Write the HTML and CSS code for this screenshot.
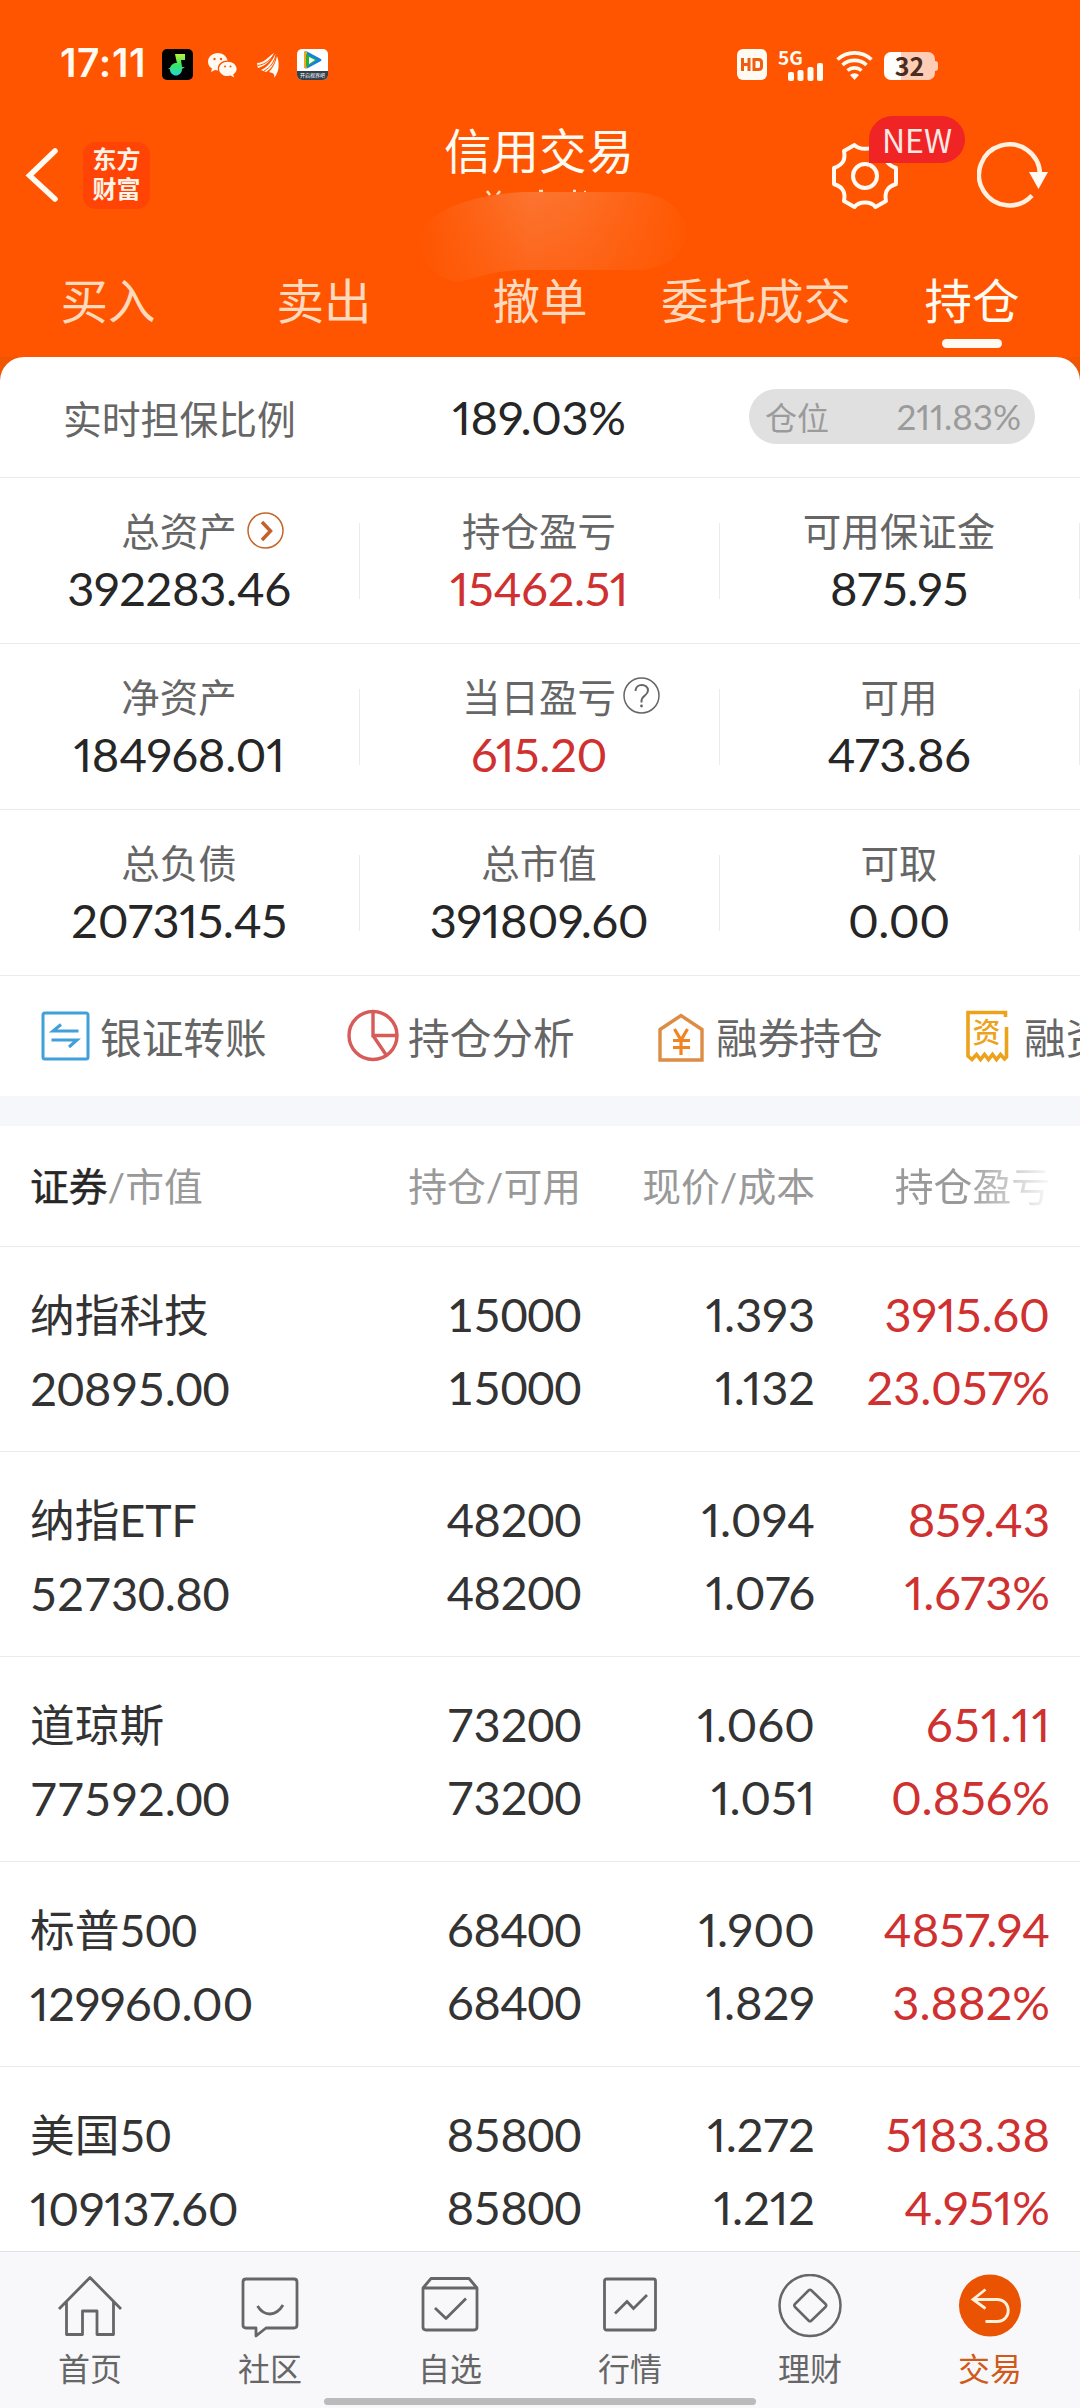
FILE: index.html
```html
<!DOCTYPE html>
<html lang="zh-CN">
<head>
<meta charset="utf-8">
<title>信用交易</title>
<link rel="stylesheet" href="styles.css">
</head>
<body>
<div class="app">
  <header class="header">
    <div class="status">
      <div class="status-left">
        <span class="clock">17:11</span>
        <svg class="st-music" width="31" height="31" viewBox="0 0 31 31"><defs><linearGradient id="mg" x1="0" y1="0" x2="0" y2="1"><stop offset="0" stop-color="#b9f23c"/><stop offset=".5" stop-color="#38e860"/><stop offset="1" stop-color="#25d3d8"/></linearGradient></defs><rect width="31" height="31" rx="5" fill="#000"/><path d="M13 5h10v6h-4l1 7h3l-3 2c0 4-3 6.500-6 6.500s-6-2.500-6-6l-2-1.500h2c1-3 3-5 7-5l-1-4z" fill="url(#mg)"/></svg>
        <svg class="st-wechat" width="29" height="26" viewBox="0 0 29 26"><path fill="#fffaf2" d="M10 0C4.500 0 0 3.800 0 8.700c0 2.900 1.500 5.200 4 6.800L3 19l4-2 3 .4a8.500 8.500 0 0 1-.2-2C9.800 11 14 7.600 19.600 7.600 18.500 3 14.500 0 10 0z"/><path fill="#fffaf2" d="M19.800 8.700c-4.900 0-8.700 3.200-8.700 7.200s3.800 7.200 8.700 7.200c1 0 2-.2 3-.5l3.300 1.900-.9-3.100c2.200-1.400 3.400-3.300 3.400-5.500 0-4-3.900-7.200-8.800-7.200z"/><g fill="#ff5500"><circle cx="6.500" cy="6" r="1.200"/><circle cx="13" cy="6" r="1.200"/><circle cx="17" cy="13.500" r="1"/><circle cx="22.500" cy="13.500" r="1"/></g></svg>
        <svg class="st-wing" width="22" height="25" viewBox="0 0 22 25"><g fill="#fffaf2"><path d="M0 10C7 10 11 4 17 0 14 7 9 13 1 15z"/><path d="M4 17C11 14 15 8 18.500 1 19 9 15 15 9 19z"/><path d="M12 19C17 14 19 8 20 3c3 8 2 16-3 22 1-3 0-5-5-6z"/></g><path d="M1 12.500C9 11 13 7 17.500 1M7 18c7-4 10-9 12-16" fill="none" stroke="#ff5500" stroke-width="1"/></svg>
        <svg class="st-video" width="31" height="31" viewBox="0 0 31 31"><defs><clipPath id="vc"><rect width="31" height="31" rx="5"/></clipPath></defs><g clip-path="url(#vc)"><rect width="31" height="31" fill="#fff"/><path d="M7 4c0-2 2-2 4-1l12 6.500c2 1 2 2 0 3L11 19c-2 1-4 0-4-1z" fill="#1680df"/><path d="M7 4c0-2 2-2 3-1v16c-1 1-3 0-3-1z" fill="#f3a51c"/><path d="M9 5l11 6-11 7z" fill="#25b23c"/><path d="M12 8l6 3-6 4z" fill="#fff"/><rect y="22" width="31" height="9" fill="#34404c"/></g><text x="15.500" y="28" font-size="5" text-anchor="middle" fill="#fff" class="cjk">开启视界吧</text></svg>
      </div>
      <div class="status-right">
        <svg width="30" height="31" viewBox="0 0 30 31"><rect width="30" height="31" rx="6" fill="#fffaf2"/><path d="M5.500 9v13M12 9v13M5.500 15.500H12M17 10.500h4.500q3 0 3 3v4q0 3-3 3H17z" fill="none" stroke="#ef5d10" stroke-width="3"/></svg>
        <div class="signal"><span class="net">5G</span><svg width="45" height="32" viewBox="0 0 45 32"><g fill="#fffaf2"><rect x="9" y="23" width="6" height="9" rx="2"/><rect x="18.500" y="21" width="6" height="11" rx="2"/><rect x="28.500" y="18" width="6" height="14" rx="2"/><rect x="38" y="14" width="6" height="18" rx="2"/></g></svg></div>
        <svg class="st-wifi" width="37" height="29" viewBox="0 0 37 29"><g fill="none" stroke="#fffaf2" stroke-width="3.600"><path d="M1.500 8.500a25 25 0 0 1 34 0M6.500 14a18 18 0 0 1 24 0M11.500 19.500a10.500 10.500 0 0 1 14 0"/></g><path d="M14 24a6.500 6.500 0 0 1 9 0L18.500 29z" fill="#fffaf2"/></svg>
        <div class="battery">32</div>
      </div>
    </div>
    <div class="titlebar">
      <svg class="back" width="34" height="58" viewBox="0 0 34 58"><path d="M31 5L5.500 29.500 31 53" fill="none" stroke="#fffaf2" stroke-width="5.500" stroke-linecap="round" stroke-linejoin="miter"/></svg>
      <div class="logo"><span>东方</span><span>财富</span></div>
      <h1 class="title">信用交易</h1>
      <div class="tools">
        <svg class="gear" width="68" height="68" viewBox="0 0 68 68"><g fill="none" stroke="#fffaf2" stroke-width="4" stroke-linejoin="round"><path d="M23.500 3C28 8 40 8 44.500 3L55 9C53.500 17 55 22.500 65 26V42C55 45.500 53.500 51 55 59L44.500 65C40 59 28 59 23.500 65L13 59C14.500 51 13 45.500 3 42V26C13 22.500 14.500 17 13 9z"/><circle cx="34" cy="34" r="12"/></g></svg>
        <span class="new">NEW</span>
        <svg class="refresh" width="72" height="66" viewBox="0 0 72 66"><path d="M55 53.500A30.500 30.500 0 1 1 63 32" fill="none" stroke="#fff0e0" stroke-width="4.500"/><path d="M52 30h19L61.500 47z" fill="#fffaf2"/></svg>
      </div>
      <svg class="smudge" width="270" height="94" viewBox="0 0 270 94"><defs><linearGradient id="sg" x1="0" y1="0" x2="1" y2="0"><stop offset="0" stop-color="#ff5500"/><stop offset=".42" stop-color="#fc7430"/><stop offset=".58" stop-color="#fd7029"/><stop offset="1" stop-color="#ff5802"/></linearGradient><linearGradient id="sf" x1="0" y1="0" x2="0" y2="1"><stop offset="0" stop-color="#ff5500" stop-opacity="0"/><stop offset="1" stop-color="#ff5500" stop-opacity=".5"/></linearGradient></defs><path d="M69 3l3 4M82 3l-3 4M121 3h4M155 3h3M166 4h2" stroke="#ffe3cb" stroke-width="2.500"/><path d="M0 50C8 24 50 7 105 4H210C245 3 268 22 268 44S248 82 218 82H105C75 82 60 90 40 94 18 90 4 75 0 50z" fill="url(#sg)"/><path d="M0 50C8 24 50 7 105 4H210C245 3 268 22 268 44S248 82 218 82H105C75 82 60 90 40 94 18 90 4 75 0 50z" fill="url(#sf)"/></svg>
    </div>
    <nav class="tabs"><span>买入</span><span>卖出</span><span>撤单</span><span>委托成交</span><span class="on">持仓</span></nav>
  </header>
  <main class="panel">
    <section class="ratio"><span class="ratio-label">实时担保比例</span><span class="num ratio-val">189.03%</span><div class="pos"><span>仓位</span><span class="pos-num">211.83%</span></div></section>
    <section class="stats">
      <div class="stat"><div class="k">总资产<svg class="k-go" width="37" height="37" viewBox="0 0 37 37"><circle cx="18.500" cy="18.500" r="17.500" fill="none" stroke="#c4662c" stroke-width="1.500"/><path d="M15 10l8.500 9-8.500 9" fill="none" stroke="#c4602a" stroke-width="3.500"/></svg></div><div class="v num">392283.46</div></div>
      <div class="stat"><div class="k">持仓盈亏</div><div class="v num red">15462.51</div></div>
      <div class="stat"><div class="k">可用保证金</div><div class="v num">875.95</div></div>
      <div class="stat"><div class="k">净资产</div><div class="v num">184968.01</div></div>
      <div class="stat"><div class="k">当日盈亏<svg class="k-help" width="37" height="37" viewBox="0 0 37 37"><circle cx="18.500" cy="18.500" r="17.500" fill="none" stroke="#666" stroke-width="1.500"/><path d="M12.500 14c0-8 12.500-8 12.500-.5 0 5-6.500 5-6.500 10.500v1.500" fill="none" stroke="#666" stroke-width="2"/><circle cx="18.500" cy="29" r="1.400" fill="#666"/></svg></div><div class="v num red">615.20</div></div>
      <div class="stat"><div class="k">可用</div><div class="v num">473.86</div></div>
      <div class="stat"><div class="k">总负债</div><div class="v num">207315.45</div></div>
      <div class="stat"><div class="k">总市值</div><div class="v num">391809.60</div></div>
      <div class="stat"><div class="k">可取</div><div class="v num">0.00</div></div>
    </section>
    <section class="quick">
      <div class="q"><svg width="52" height="54" viewBox="0 0 52 54"><g fill="none" stroke="#419fd9"><rect x="4" y="4" width="45" height="46" rx="2" stroke-width="3"/><path d="M39.500 22H14l8-6.500M12.500 31H38l-8 7" stroke-width="3"/></g></svg><span>银证转账</span></div>
      <div class="q"><svg width="52" height="54" viewBox="0 0 52 54"><g fill="none" stroke="#d75b59" stroke-width="3.400"><circle cx="26" cy="26.500" r="24"/><path d="M26 2.500v24h24M26 26.500L39.500 46.500"/></g></svg><span>持仓分析</span></div>
      <div class="q"><svg width="52" height="54" viewBox="0 0 52 54"><path d="M5 20.500L26 6.500 47 20.500v30.500H5z" fill="none" stroke="#dd8c45" stroke-width="3.400"/><path d="M19.500 20l6.500 11 6.500-11M26 30v16M18 31.500h17M18 38.500h17" fill="none" stroke="#ef8420" stroke-width="3.200"/></svg><span>融券持仓</span></div>
      <div class="q"><svg width="52" height="54" viewBox="0 0 52 54"><g fill="none" stroke="#eda21b" stroke-width="3.600"><path d="M42.500 8V3.500H5V47l4 3.500 4.500-5 4 5 4-5 4 5 4-5 4 5 4-5 4 4.500 2-2V18"/></g><text x="23.500" y="34" text-anchor="middle" class="zi" fill="#eda21b">资</text></svg><span>融资持仓</span></div>
    </section>
    <section class="holdings">
      <div class="row head"><span><b>证券</b>/市值</span><span>持仓/可用</span><span>现价/成本</span><span class="fade">持仓盈亏</span></div>
      <div class="row"><div><span class="name">纳指科技</span><br>20895.00</div><div>15000<br>15000</div><div>1.393<br>1.132</div><div class="red">3915.60<br>23.057%</div></div>
      <div class="row"><div><span class="name">纳指ETF</span><br>52730.80</div><div>48200<br>48200</div><div>1.094<br>1.076</div><div class="red">859.43<br>1.673%</div></div>
      <div class="row"><div><span class="name">道琼斯</span><br>77592.00</div><div>73200<br>73200</div><div>1.060<br>1.051</div><div class="red"><span class="wide">651.11</span><br>0.856%</div></div>
      <div class="row"><div><span class="name">标普500</span><br><span class="long">129960.00</span></div><div>68400<br>68400</div><div>1.900<br>1.829</div><div class="red">4857.94<br>3.882%</div></div>
      <div class="row"><div><span class="name">美国50</span><br><span class="long">109137.60</span></div><div>85800<br>85800</div><div>1.272<br>1.212</div><div class="red">5183.38<br>4.951%</div></div>
    </section>
  </main>
  <footer class="bottom">
    <div class="b"><svg width="66" height="66" viewBox="0 0 66 66"><g fill="none" stroke="#666" stroke-width="2.800" stroke-linejoin="round"><path d="M2 35L33 3.500 64 35M9.500 28v32.500h16V37h14.500v23.500h16.500V28"/></g></svg><span>首页</span></div>
    <div class="b"><svg width="66" height="66" viewBox="0 0 66 66"><g fill="none" stroke="#666" stroke-width="2.800" stroke-linejoin="round"><path d="M9 5h48q3 0 3 3v43q0 3-3 3H29l-10 8v-8H9q-3 0-3-3V8q0-3 3-3z"/><path d="M20.500 32q5 8 12.500 8t13-9"/></g></svg><span>社区</span></div>
    <div class="b"><svg width="66" height="66" viewBox="0 0 66 66"><g fill="none" stroke="#666" stroke-width="2.800" stroke-linejoin="round"><path d="M6 14l8-9.500h38l8 9.500v39q0 3-3 3H9q-3 0-3-3zM6 14h54M18 34l11 10.500 20-20"/></g></svg><span>自选</span></div>
    <div class="b"><svg width="66" height="66" viewBox="0 0 66 66"><g fill="none" stroke="#666" stroke-width="2.800"><rect x="7.500" y="5" width="51" height="51" rx="2"/><path d="M18 39.500l12-12 6.500 7L50 21"/></g></svg><span>行情</span></div>
    <div class="b"><svg width="66" height="66" viewBox="0 0 66 66"><g fill="none" stroke="#666" stroke-width="2.500"><circle cx="33" cy="31.500" r="30.500"/><path d="M31.500 16.500q1.500-1.500 3 0l14 13.500q1.500 1.500 0 3l-14 13.500q-1.500 1.500-3 0L18 33q-1.500-1.500 0-3z"/></g></svg><span>理财</span></div>
    <div class="b on"><svg width="66" height="66" viewBox="0 0 66 66"><circle cx="33" cy="31.500" r="31" fill="#e95301"/><path d="M28.500 15.500L16 25.500l12.500 9M16 25.500h24c15 0 15 22 0 22H28.500" fill="none" stroke="#fff0dc" stroke-width="2.800"/></svg><span>交易</span></div>
    <div class="homebar"></div>
  </footer>
</div>
</body>
</html>
```

FILE: styles.css
```css
* { box-sizing: border-box; }
body { margin: 0; background: #fff; }
.app { width: 1080px; height: 2408px; overflow: hidden; display: flex; flex-direction: column; font-family: Lato, "Noto Sans CJK SC", sans-serif; font-variant-numeric: proportional-nums; color: #333; background: #fff; }
svg { display: block; flex: none; }
.cjk { font-family: "Noto Sans CJK SC", sans-serif; }
.zi { font: 500 28px "Noto Sans CJK SC", sans-serif; }

.header { height: 357px; flex: none; background: #ff5500; display: flex; flex-direction: column; }
.status { height: 128px; padding: 49px 142px 0 60px; display: flex; justify-content: space-between; align-items: flex-start; }
.status-left, .status-right { display: flex; align-items: flex-start; }
.clock { width: 102px; font: 600 39px/28px Inter, sans-serif; letter-spacing: .6px; color: #fffaf2; }
.st-wechat { margin: 4px 0 0 15px; }
.st-wing { margin: 4px 0 0 20px; }
.st-video { margin-left: 18px; }
.signal { position: relative; margin-left: 12px; }
.net { position: absolute; left: -1px; top: -1px; font: 700 19px/18px "Noto Sans CJK SC", sans-serif; color: #fffaf2; }
.st-wifi { margin: 2px 0 0 12px; }
.battery { position: relative; width: 51px; height: 28px; margin: 3px 3px 0 11px; border-radius: 7px; background: linear-gradient(90deg, #fff 17px, #ffcdb6 17px); font: 700 25px/26px "Noto Sans CJK SC", sans-serif; text-align: center; color: #4a2d20; }
.battery::after { content: ""; position: absolute; left: 51px; top: 9px; width: 3px; height: 10px; border-radius: 0 3px 3px 0; background: #ffcdb6; }
.titlebar { position: relative; height: 129px; display: flex; align-items: flex-start; }
.back { margin: 18px 0 0 24px; }
.logo { width: 67px; height: 67px; margin: 14px 0 0 25px; padding-bottom: 5px; border-radius: 13px; background: #ff4405; display: flex; flex-direction: column; align-items: center; justify-content: center; font: 700 24px/30px "Noto Sans CJK SC", sans-serif; color: #fff2e6; }
.title { flex: 1; margin: -4px 0 0 294px; font: 400 47.500px/50px "Noto Sans CJK SC", sans-serif; color: #fffaf2; }
.tools { display: flex; width: 249px; padding-top: 14px; position: relative; justify-content: space-between; }
.refresh { margin-right: 31px; }
.new { position: absolute; left: 38px; top: -12px; width: 96px; height: 47px; border-radius: 24px 24px 24px 0; background: #f02424; color: #ffe9e4; font: 400 32px/47px "Noto Sans CJK SC", sans-serif; text-align: center; }
.smudge { position: absolute; left: 418px; top: 60px; }
.tabs { height: 100px; display: grid; grid-template-columns: repeat(5, 216px); text-align: center; font: 400 47.500px/84px "Noto Sans CJK SC", sans-serif; color: #ffd9bd; position: relative; }
.tabs .on { color: #fffaf2; display: flex; flex-direction: column; align-items: center; }
.tabs .on::after { content: ""; width: 60px; height: 9px; border-radius: 5px; background: #fffaf2; margin-top: -2px; }

.panel { height: 1894px; flex: none; overflow: hidden; background: linear-gradient(#f05500 0 24px, #fff 24px); }
.ratio { height: 121px; border-bottom: 1px solid #ebebeb; border-radius: 24px 24px 0 0; background: #fff; display: grid; grid-template-columns: 358px 362px 286px; align-items: center; }
.ratio-label { font-size: 38.800px; padding-left: 63px; color: #666; }
.num { font-size: 47px; color: #262626; letter-spacing: -.3px; }
.ratio-val { text-align: center; }
.pos { width: 286px; height: 55px; margin: -2px 0 0 29px; border-radius: 28px; background: #e0e0e0; color: #9b9b9b; font-size: 32px; display: flex; justify-content: space-between; align-items: center; padding: 0 14px 0 16px; }
.pos-num { font-size: 35px; }
.stats { display: grid; grid-template-columns: repeat(3, 360px); grid-auto-rows: 166px; }
.stat { border-bottom: 1px solid #ebebeb; padding-right: 2px; text-align: center; background: linear-gradient(#ebebeb, #ebebeb) 359px 45px / 1px 76px no-repeat; }
.k { position: relative; width: max-content; margin: 28px auto 0; font-size: 38.500px; line-height: 50px; color: #666; }
.k svg { position: absolute; left: 100%; top: 6px; margin-left: 10px; }
.k .k-help { margin-left: 7px; top: 5px; }
.v { line-height: 60px; margin-top: 2px; }
.red, .num.red { color: #cf3030; }
.quick { height: 150px; border-bottom: 30px solid #f6f7fa; display: flex; padding: 33px 0 0 39px; overflow: hidden; }
.q { flex: none; display: flex; gap: 9px; width: 308px; font-size: 41.700px; line-height: 58px; color: #666; white-space: nowrap; }
.row { height: 205px; padding: 31px 30px 0; border-bottom: 1px solid #ebebeb; display: grid; grid-template-columns: 280px 271px 234px 235px; font-size: 47px; line-height: 73px; text-align: right; }
.row > :first-child { text-align: left; }
.row > :nth-child(-n+2) { font-variant-numeric: tabular-nums; }
.row > :first-child { letter-spacing: -.3px; }
.row > :nth-child(2) { letter-spacing: -.4px; }
.name { font-size: 44.700px; letter-spacing: 0; }
.long { font-variant-numeric: proportional-nums; }
.wide { letter-spacing: 1.500px; margin-right: -1.500px; }
.head { height: 121px; padding-top: 0; font-size: 38.800px; line-height: 121px; color: #999; }
.head > :nth-child(-n+2) { letter-spacing: 0; }
.head b { font-weight: 400; color: #262626; -webkit-text-stroke: .5px #262626; }
.fade { -webkit-mask-image: linear-gradient(90deg, #000 150px, transparent 240px); }

.bottom { position: relative; height: 157px; flex: none; border-top: 1px solid #e2e2e4; background: #f8f8fb; display: grid; grid-template-columns: repeat(6, 180px); }
.b { display: flex; flex-direction: column; align-items: center; padding-top: 22px; font-size: 32px; line-height: 46px; gap: 6px; color: #666; }
.b.on { color: #cf5a1a; }
.homebar { position: absolute; left: 324px; top: 146px; width: 432px; height: 7px; border-radius: 4px; background: #bbb; }
```
